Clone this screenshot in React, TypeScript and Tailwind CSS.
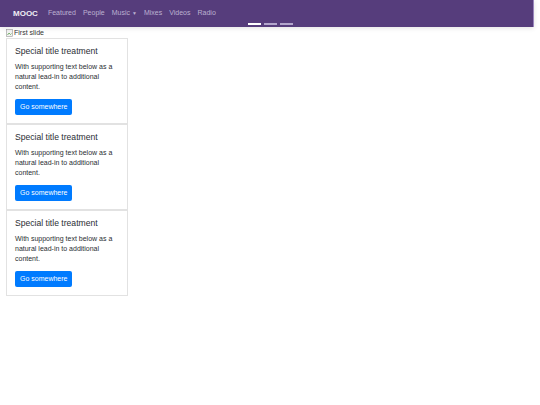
import React from "react";

const links = ["Featured", "People", "Music", "Mixes", "Videos", "Radio"];

function Card() {
  return (
    <div className="w-[122px] border border-[#e2e2e2] bg-white px-[8px] pt-[7px] pb-[8px] leading-[10px]">
      <h5 className="text-[8.6px] leading-[11px] text-[#2a2e33] mb-[5px]">Special title treatment</h5>
      <p className="text-[7px] leading-[10px] text-[#2a2e33] mb-[7px]">
        With supporting text below as a natural lead-in to additional content.
      </p>
      <button className="block h-[16px] px-[5px] rounded-[2px] bg-[#007bff] text-white text-[7px] leading-[16px]">
        Go somewhere
      </button>
    </div>
  );
}

export default function App() {
  return (
    <div className="w-[540px] h-[405px] bg-white relative" style={{ fontFamily: '"Liberation Sans", Arial, sans-serif' }}>
      <nav className="relative z-10 w-[534px] h-[27px] bg-[#563d7c] border-r border-[#9a86bd] flex items-center pl-[13px] gap-[7px] shadow-[0_1px_5px_rgba(0,0,0,0.12)]">
        <span className="text-[8px] font-bold text-[#f0edf5] mr-[3px]">MOOC</span>
        {links.map((l) => (
          <span key={l} className="text-[7px] text-[#bcb1d1] flex items-center">
            {l}
            {l === "Music" && <span className="ml-[2px] text-[5px]">▼</span>}
          </span>
        ))}
        <div className="absolute left-[248px] top-[23px] flex gap-[3px]">
          <span className="block w-[13px] h-[2px] bg-white" />
          <span className="block w-[13px] h-[2px] bg-[#b3a6cc]" />
          <span className="block w-[13px] h-[2px] bg-[#b3a6cc]" />
        </div>
      </nav>
      <div className="pl-[6px]">
        <div className="h-[11px] flex items-center text-[7px] text-[#333] pt-[1px]">
          <svg width="7" height="8" viewBox="0 0 7 8" className="mr-[1px]">
            <rect x="0.5" y="0.5" width="6" height="7" fill="#f2f2f2" stroke="#999" strokeWidth="0.6" />
            <path d="M1.5 6 L3 4 L4.5 5.5 L5.5 4.5" stroke="#4a9a3a" strokeWidth="0.7" fill="none" />
          </svg>
          First slide
        </div>
        <div className="flex flex-col">
          <Card />
          <Card />
          <Card />
        </div>
      </div>
    </div>
  );
}
